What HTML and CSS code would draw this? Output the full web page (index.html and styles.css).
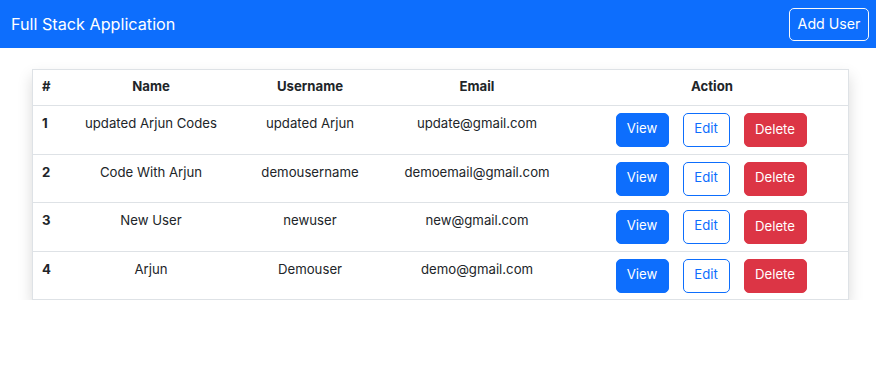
FILE: index.html
```html
<!DOCTYPE html>
<html lang="en">
<head>
    <meta charset="UTF-8">
    <meta name="viewport" content="width=device-width, initial-scale=1.0">
    <title>Full Stack Application</title>
    <link rel="stylesheet" href="styles.css">
</head>
<body>
    <nav class="navbar">
        <a class="navbar-brand" href="#">Full Stack Application</a>
        <a class="btn btn-outline-light" href="#">Add User</a>
    </nav>

    <div class="container">
        <div class="card">
            <table class="table">
                <thead>
                    <tr>
                        <th class="col-id">#</th>
                        <th class="col-name">Name</th>
                        <th class="col-username">Username</th>
                        <th class="col-email">Email</th>
                        <th class="col-action">Action</th>
                    </tr>
                </thead>
                <tbody>
                    <tr>
                        <th>1</th>
                        <td>updated Arjun Codes</td>
                        <td>updated Arjun</td>
                        <td>update@gmail.com</td>
                        <td>
                            <div class="actions">
                                <a href="#" class="btn btn-primary">View</a>
                                <a href="#" class="btn btn-outline-primary">Edit</a>
                                <button class="btn btn-danger">Delete</button>
                            </div>
                        </td>
                    </tr>
                    <tr>
                        <th>2</th>
                        <td>Code With Arjun</td>
                        <td>demousername</td>
                        <td>demoemail@gmail.com</td>
                        <td>
                            <div class="actions">
                                <a href="#" class="btn btn-primary">View</a>
                                <a href="#" class="btn btn-outline-primary">Edit</a>
                                <button class="btn btn-danger">Delete</button>
                            </div>
                        </td>
                    </tr>
                    <tr>
                        <th>3</th>
                        <td>New User</td>
                        <td>newuser</td>
                        <td>new@gmail.com</td>
                        <td>
                            <div class="actions">
                                <a href="#" class="btn btn-primary">View</a>
                                <a href="#" class="btn btn-outline-primary">Edit</a>
                                <button class="btn btn-danger">Delete</button>
                            </div>
                        </td>
                    </tr>
                    <tr>
                        <th>4</th>
                        <td>Arjun</td>
                        <td>Demouser</td>
                        <td>demo@gmail.com</td>
                        <td>
                            <div class="actions">
                                <a href="#" class="btn btn-primary">View</a>
                                <a href="#" class="btn btn-outline-primary">Edit</a>
                                <button class="btn btn-danger">Delete</button>
                            </div>
                        </td>
                    </tr>
                </tbody>
            </table>
        </div>
    </div>
</body>
</html>
```

FILE: styles.css
```css
:root {
    --primary: #0d6efd;
    --danger: #dc3545;
    --text: #212529;
    --border: #dee2e6;
}

* {
    margin: 0;
    padding: 0;
    box-sizing: border-box;
}

body {
    font-family: Inter, "Noto Sans", sans-serif;
    font-size: 13.2px;
    line-height: 21px;
    color: var(--text);
    background: #fff;
}

/* Navbar */
.navbar {
    height: 48px;
    background: var(--primary);
    display: flex;
    align-items: center;
    justify-content: space-between;
    padding: 0 7px 0 11px;
}

.navbar-brand {
    color: #fff;
    text-decoration: none;
    font-size: 16.2px;
}

/* Buttons */
.btn {
    display: inline-flex;
    align-items: center;
    justify-content: center;
    height: 34px;
    padding: 0 0 3px;
    border: 1px solid transparent;
    border-radius: 5px;
    font-family: inherit;
    font-size: 13.2px;
    white-space: nowrap;
    text-decoration: none;
    cursor: pointer;
}

.btn-outline-light {
    height: 33px;
    width: 80px;
    padding-bottom: 1px;
    color: #fff;
    border-color: #f8f9fa;
    font-size: 14.2px;
}

.btn-primary {
    width: 53px;
    background: var(--primary);
    border-color: var(--primary);
    color: #fff;
}

.btn-outline-primary {
    width: 47px;
    color: var(--primary);
    border-color: var(--primary);
    background: #fff;
}

.btn-danger {
    width: 63px;
    background: var(--danger);
    border-color: var(--danger);
    color: #fff;
}

/* Table card */
.container {
    padding: 21px 27px 0 32px;
}

.card {
    border: 1px solid var(--border);
    box-shadow: 0 7px 14px rgba(0, 0, 0, 0.15);
    background: #fff;
}

.table {
    width: 100%;
    border-collapse: collapse;
    table-layout: fixed;
}

.table th,
.table td {
    text-align: center;
    vertical-align: top;
    padding: 7px 7px 6.5px;
}

.table thead th {
    font-weight: 700;
    padding: 6px 7px 8px;
    border-bottom: 1px solid var(--border);
}

.table tbody tr + tr {
    border-top: 1px solid var(--border);
}

.table tbody th {
    font-weight: 700;
}

.table th:first-child {
    text-align: left;
    padding-left: 9px;
}

.col-id { width: 27px; }
.col-name { width: 182px; }
.col-username { width: 136px; }
.col-email { width: 198px; }
.col-action { width: 272px; }

.actions {
    display: flex;
    justify-content: center;
    gap: 14px;
    padding-right: 2px;
}
```
